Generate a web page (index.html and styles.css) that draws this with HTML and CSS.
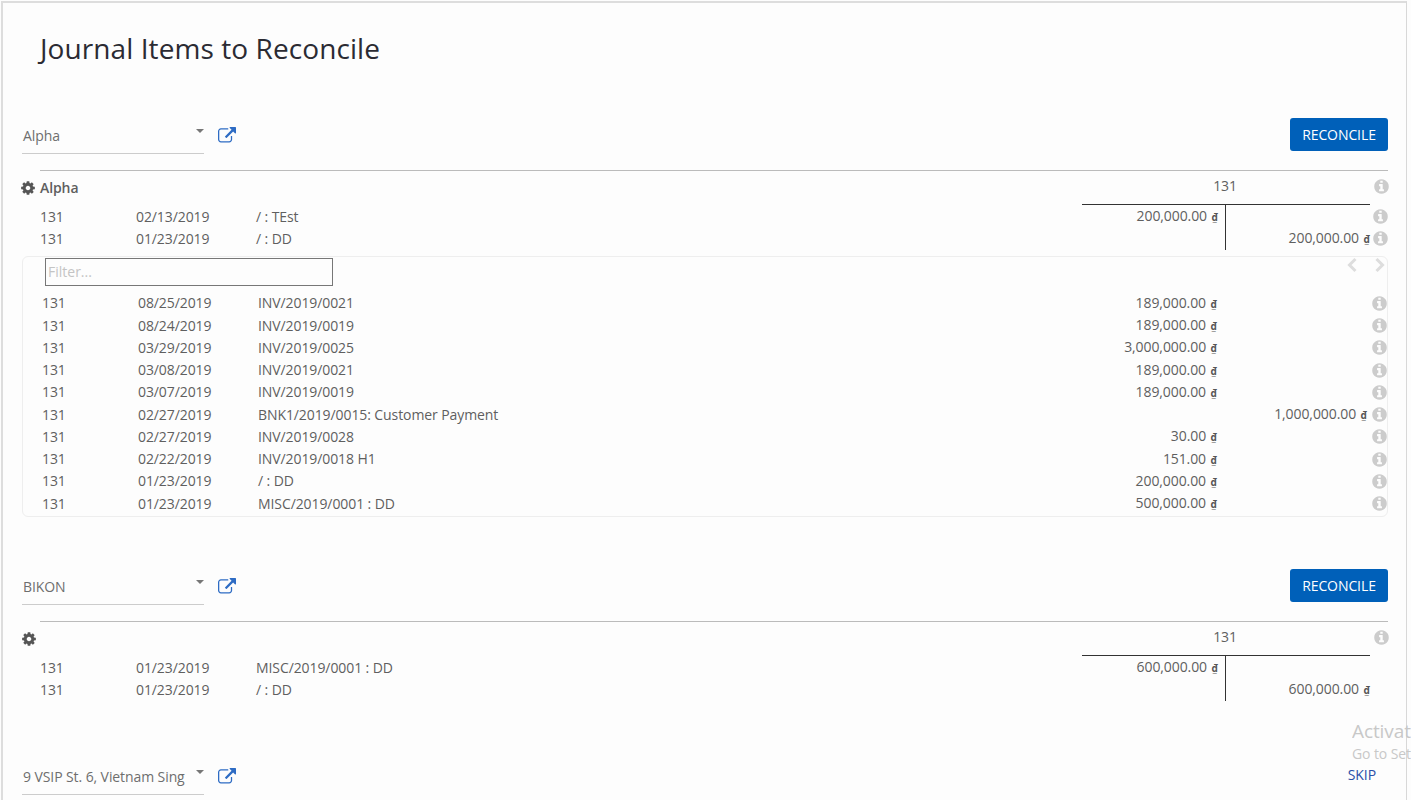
FILE: index.html
```html
<!DOCTYPE html>
<html lang="en">
<head>
<meta charset="utf-8">
<title>Journal Items to Reconcile</title>
<link rel="stylesheet" href="styles.css">
</head>
<body>
<svg class="defs" width="0" height="0" aria-hidden="true">
  <symbol id="i-info" viewBox="0 0 1792 1792"><path d="M1152 1376v-160q0-14-9-23t-23-9h-96v-512q0-14-9-23t-23-9h-320q-14 0-23 9t-9 23v160q0 14 9 23t23 9h96v320h-96q-14 0-23 9t-9 23v160q0 14 9 23t23 9h448q14 0 23-9t9-23zm-128-896v-160q0-14-9-23t-23-9h-192q-14 0-23 9t-9 23v160q0 14 9 23t23 9h192q14 0 23-9t9-23zm640 416q0 209-103 385.5t-279.5 279.5-385.5 103-385.5-103-279.5-279.5-103-385.5 103-385.5 279.5-279.5 385.5-103 385.5 103 279.5 279.5 103 385.5z"/></symbol>
  <symbol id="i-cog" viewBox="0 0 1792 1792"><path d="M1152 896q0-106-75-181t-181-75-181 75-75 181 75 181 181 75 181-75 75-181zm512-109v222q0 12-8 23t-20 13l-185 28q-19 54-39 91 35 50 107 138 10 12 10 25t-9 23q-27 37-99 108t-94 71q-12 0-26-9l-138-108q-44 23-91 38-16 136-29 186-7 28-36 28h-222q-14 0-24.5-8.5t-11.5-21.5l-28-184q-49-16-90-37l-141 107q-10 9-25 9-14 0-25-11-126-114-165-168-7-10-7-23 0-12 8-23 15-21 51-66.5t54-70.5q-27-50-41-99l-183-27q-13-2-21-12.5t-8-23.5v-222q0-12 8-23t19-13l186-28q14-46 39-92-40-57-107-138-10-12-10-24 0-10 9-23 26-36 98.5-107.5t94.5-71.5q13 0 26 10l138 107q44-23 91-38 16-136 29-186 7-28 36-28h222q14 0 24.5 8.5t11.5 21.5l28 184q49 16 90 37l142-107q9-9 24-9 13 0 25 10 129 119 165 170 7 8 7 22 0 12-8 23-15 21-51 66.5t-54 70.5q26 50 41 98l183 28q13 2 21 12.5t8 23.5z"/></symbol>
  <symbol id="i-link" viewBox="0 0 1792 1792"><path d="M1408 928v320q0 119-84.5 203.5t-203.5 84.5h-832q-119 0-203.5-84.5t-84.5-203.5v-832q0-119 84.5-203.5t203.5-84.5h704q14 0 23 9t9 23v64q0 14-9 23t-23 9h-704q-66 0-113 47t-47 113v832q0 66 47 113t113 47h832q66 0 113-47t47-113v-320q0-14 9-23t23-9h64q14 0 23 9t9 23zm384-864v512q0 26-19 45t-45 19-45-19l-176-176-652 652q-10 10-23 10t-23-10l-114-114q-10-10-10-23t10-23l652-652-176-176q-19-19-19-45t19-45 45-19h512q26 0 45 19t19 45z"/></symbol>
  <symbol id="i-left" viewBox="0 0 11 16"><polyline points="8.5,2 2.5,8 8.5,14" fill="none" stroke-width="3"/></symbol>
  <symbol id="i-right" viewBox="0 0 11 16"><polyline points="2.5,2 8.5,8 2.5,14" fill="none" stroke-width="3"/></symbol>
</svg>

<main class="page">
  <h1 class="title">Journal Items to Reconcile</h1>

  <section class="partner">
    <div class="controls">
      <div class="select"><span>Alpha</span><i class="caret"></i></div>
      <svg class="ext"><use href="#i-link"/></svg>
      <button class="btn">RECONCILE</button>
    </div>
    <div class="ledger">
      <div class="head">
        <svg class="cog"><use href="#i-cog"/></svg>
        <span class="name">Alpha</span>
        <span class="acct">131</span>
        <svg class="info"><use href="#i-info"/></svg>
      </div>
      <div class="row"><span>131</span><span>02/13/2019</span><span>/ : TEst</span><span class="dr">200,000.00 <b>₫</b></span><span class="cr"></span><svg class="info"><use href="#i-info"/></svg></div>
      <div class="row"><span>131</span><span>01/23/2019</span><span>/ : DD</span><span class="dr"></span><span class="cr">200,000.00 <b>₫</b></span><svg class="info"><use href="#i-info"/></svg></div>
    </div>
    <div class="panel">
      <div class="panel-top">
        <input class="filter" type="text" placeholder="Filter...">
        <div class="pager"><svg><use href="#i-left"/></svg><svg><use href="#i-right"/></svg></div>
      </div>
      <div class="prow"><span>131</span><span>08/25/2019</span><span>INV/2019/0021</span><span class="num">189,000.00 <b>₫</b></span><span class="num"></span><svg class="info"><use href="#i-info"/></svg></div>
      <div class="prow"><span>131</span><span>08/24/2019</span><span>INV/2019/0019</span><span class="num">189,000.00 <b>₫</b></span><span class="num"></span><svg class="info"><use href="#i-info"/></svg></div>
      <div class="prow"><span>131</span><span>03/29/2019</span><span>INV/2019/0025</span><span class="num">3,000,000.00 <b>₫</b></span><span class="num"></span><svg class="info"><use href="#i-info"/></svg></div>
      <div class="prow"><span>131</span><span>03/08/2019</span><span>INV/2019/0021</span><span class="num">189,000.00 <b>₫</b></span><span class="num"></span><svg class="info"><use href="#i-info"/></svg></div>
      <div class="prow"><span>131</span><span>03/07/2019</span><span>INV/2019/0019</span><span class="num">189,000.00 <b>₫</b></span><span class="num"></span><svg class="info"><use href="#i-info"/></svg></div>
      <div class="prow"><span>131</span><span>02/27/2019</span><span>BNK1/2019/0015: Customer Payment</span><span class="num"></span><span class="num">1,000,000.00 <b>₫</b></span><svg class="info"><use href="#i-info"/></svg></div>
      <div class="prow"><span>131</span><span>02/27/2019</span><span>INV/2019/0028</span><span class="num">30.00 <b>₫</b></span><span class="num"></span><svg class="info"><use href="#i-info"/></svg></div>
      <div class="prow"><span>131</span><span>02/22/2019</span><span>INV/2019/0018 H1</span><span class="num">151.00 <b>₫</b></span><span class="num"></span><svg class="info"><use href="#i-info"/></svg></div>
      <div class="prow"><span>131</span><span>01/23/2019</span><span>/ : DD</span><span class="num">200,000.00 <b>₫</b></span><span class="num"></span><svg class="info"><use href="#i-info"/></svg></div>
      <div class="prow"><span>131</span><span>01/23/2019</span><span>MISC/2019/0001 : DD</span><span class="num">500,000.00 <b>₫</b></span><span class="num"></span><svg class="info"><use href="#i-info"/></svg></div>
    </div>
  </section>

  <section class="partner partner-tall">
    <div class="controls">
      <div class="select"><span>BIKON</span><i class="caret"></i></div>
      <svg class="ext"><use href="#i-link"/></svg>
      <button class="btn">RECONCILE</button>
    </div>
    <div class="ledger">
      <div class="head">
        <svg class="cog cog-alt"><use href="#i-cog"/></svg>
        <span class="name"></span>
        <span class="acct">131</span>
        <svg class="info"><use href="#i-info"/></svg>
      </div>
      <div class="row"><span>131</span><span>01/23/2019</span><span>MISC/2019/0001 : DD</span><span class="dr">600,000.00 <b>₫</b></span><span class="cr"></span></div>
      <div class="row"><span>131</span><span>01/23/2019</span><span>/ : DD</span><span class="dr"></span><span class="cr">600,000.00 <b>₫</b></span></div>
    </div>
  </section>

  <section class="partner">
    <div class="controls">
      <div class="select"><span>9 VSIP St. 6, Vietnam Sing</span><i class="caret"></i></div>
      <svg class="ext"><use href="#i-link"/></svg>
      <a class="skip">SKIP</a>
    </div>
  </section>

  <div class="watermark"><p class="wm-a">Activate Windows</p><p class="wm-b">Go to Settings to activate Windows.</p></div>
</main>
</body>
</html>
```
FILE: styles.css
```css
* { box-sizing: border-box; }
html, body { margin: 0; height: 800px; overflow: hidden; background: #fdfdfd; }
body { font-family: "Open Sans", "Liberation Sans", sans-serif; font-size: 14px; color: #5f5f5f; letter-spacing: -0.09px; }
.defs { position: absolute; }
.page { position: relative; width: 1406px; height: 799px; margin-left: 1px; margin-top: 1px; padding: 0 18px 0 19px; border-left: 2px solid #ddd; border-top: 2px solid #ddd; border-right: 1px solid #d8d8d8; }
.title { margin: 0 0 0 18px; height: 115px; padding-top: 25px; font-size: 28px; line-height: 40px; font-weight: 400; color: #2b2b33; letter-spacing: 0.08px; }
.partner { margin-bottom: 52px; }
.partner-tall { margin-bottom: 59px; }
.controls { display: flex; align-items: flex-start; height: 36px; }
.select { position: relative; width: 182px; height: 36px; border-bottom: 1px solid #ccc; padding: 8px 0 0 1px; line-height: 20px; white-space: nowrap; color: #6e6e6e; }
.caret { position: absolute; right: 0; top: 11px; border: 4px solid transparent; border-top: 4px solid #777; border-bottom: 0; }
.ext { width: 18px; height: 18px; margin: 9px 0 0 14px; fill: #2e6cc4; }
.btn { margin-left: auto; width: 98px; height: 33px; border: 0; border-radius: 3px; background: #0060b9; color: #fff; font: inherit; letter-spacing: inherit; padding: 0; }
.skip { margin: 6px 12px 0 auto; line-height: 20px; color: #2b4fa8; }
.ledger { margin-top: 16px; margin-left: 18px; border-top: 1px solid #bbb; width: 1348px; position: relative; }
.ledger::after { content: ""; position: absolute; left: 1185px; top: 34px; bottom: -1px; width: 1px; background: #333; }
.head { display: flex; align-items: center; height: 34px; padding-bottom: 1px; position: relative; }
.head::after { content: ""; position: absolute; left: 1042px; right: 18px; bottom: 0; height: 1px; background: #333; }
.cog { position: absolute; left: -20px; top: 9px; width: 16px; height: 16px; fill: #555; }
.cog-alt { left: -19px; }
.name { font-weight: 600; }
.acct { position: absolute; left: 1042px; top: 5px; width: 286px; text-align: center; line-height: 20px; }
.head .info { position: absolute; right: -2px; top: 7px; }
.info { width: 17px; height: 17px; fill: #ccc; }
.row { display: grid; grid-template-columns: 96px 120px 826px 143px 145px 18px; height: 22px; line-height: 22px; align-items: center; }
.row .info { margin-left: 2px; }
.dr { text-align: right; padding-right: 7px; }
.cr { text-align: right; }
b { font-weight: 700; font-size: 10px; color: #555; margin-left: 1px; }
.row > span, .prow > span { white-space: nowrap; }
.panel { margin-top: 7px; width: 1366px; height: 261px; border: 1px solid #eee; border-radius: 6px; }
.panel-top { position: relative; height: 34.8px; }
.filter { position: absolute; left: 22px; top: 1px; width: 288px; height: 28px; border: 1px solid #777; background: transparent; font: inherit; padding: 0 2px 2px; outline: 0; }
.filter::placeholder { color: #c4c4c4; }
.pager { position: absolute; right: 2px; top: 0; display: flex; gap: 16px; }
.pager svg { width: 11px; height: 16px; stroke: #ddd; }
.prow { display: grid; grid-template-columns: 96px 120px 826px 143px 150px 17px; padding-left: 19px; height: 22.25px; line-height: 22px; align-items: center; }
.prow .num { text-align: right; padding-right: 10px; }
.prow .num + .num { padding-right: 10px; }
.prow .info { margin-left: -6px; }
.watermark { position: absolute; left: 1349px; top: 715px; width: 59px; overflow: hidden; color: #c8c8c8; letter-spacing: -0.1px; }
.watermark p { margin: 0; white-space: nowrap; }
.wm-a { font-size: 19px; line-height: 27px; }
.wm-b { font-size: 14px; line-height: 18px; }
```
